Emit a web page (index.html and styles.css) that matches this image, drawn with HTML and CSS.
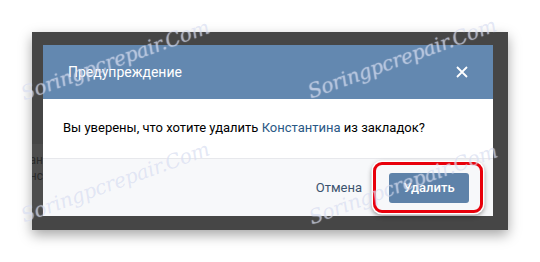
FILE: index.html
```html
<!DOCTYPE html>
<html lang="ru">
<head>
<meta charset="utf-8">
<link rel="stylesheet" href="styles.css">
</head>
<body>
<div class="page">
  <div class="frame">
    <div class="bg-strip">
      <span class="bg-text">тан</span>
      <span class="bg-text">нс</span>
    </div>
    <div class="modal">
      <div class="modal-header">
        <span class="modal-title">Предупреждение</span>
        <svg class="close" width="12" height="12" viewBox="0 0 12 12"><path d="M1 1L11 11M11 1L1 11" stroke="#fff" stroke-width="1.8" fill="none"/></svg>
      </div>
      <div class="modal-body">Вы уверены, что хотите удалить <a class="link">Константина</a> из закладок?</div>
      <div class="modal-footer">
        <span class="btn-cancel">Отмена</span>
        <span class="btn-wrap">
          <span class="btn-primary">Удалить</span>
          <span class="highlight"></span>
        </span>
      </div>
    </div>
  </div>
  <span class="wm wm1">Soringpcrepair.Com</span>
  <span class="wm wm2">Soringpcrepair.Com</span>
  <span class="wm wm3">Soringpcrepair.Com</span>
  <span class="wm wm4">Soringpcrepair.Com</span>
</div>
</body>
</html>
```
FILE: styles.css
```css
html, body {
  margin: 0;
  padding: 0;
  background: #fff;
  width: 540px;
  height: 262px;
  overflow: hidden;
}
.page {
  position: relative;
  width: 540px;
  height: 262px;
  padding: 32px 0 0 32px;
  box-sizing: border-box;
  font-family: Roboto, "Liberation Sans", Arial, sans-serif;
}
.frame {
  position: relative;
  width: 476px;
  height: 198px;
  box-sizing: border-box;
  background: #464646;
  padding: 13px 15px 14px 11px;
  box-shadow: 0 5px 12px rgba(0,0,0,0.35);
}
.bg-strip {
  position: absolute;
  left: 0;
  top: 112px;
  width: 11px;
  height: 72px;
  background: #4d4d4d;
  overflow: hidden;
  display: flex;
  flex-direction: column;
  align-items: flex-end;
}
.bg-text {
  font-size: 12px;
  color: #2a2a2a;
  line-height: 16px;
  width: 11px;
  overflow: hidden;
  white-space: nowrap;
  direction: rtl;
}
.bg-text:first-child { margin-top: 8px; }
.modal {
  position: relative;
  width: 450px;
  height: 171px;
  background: #fff;
  display: flex;
  flex-direction: column;
}
.modal-header {
  height: 54px;
  background: #6388b0;
  display: flex;
  align-items: center;
  justify-content: space-between;
  padding: 0 25px 0 25px;
}
.modal-title {
  color: #fff;
  font-size: 14px;
}
.close { display: block; }
.modal-body {
  height: 60px;
  box-sizing: border-box;
  padding: 21px 20px 0 20px;
  font-size: 13px;
  color: #000;
  line-height: 16px;
  border-bottom: 1px solid #e7e8ec;
}
.link { color: #2a5885; }
.modal-footer {
  flex: 1;
  background: #f7f8fa;
  display: flex;
  align-items: center;
  justify-content: flex-end;
  padding: 0 24px 0 0;
}
.btn-cancel {
  font-size: 13px;
  color: #3b536e;
  margin-right: 27px;
}
.btn-wrap {
  position: relative;
  display: block;
}
.btn-primary {
  display: flex;
  align-items: center;
  justify-content: center;
  width: 80px;
  height: 30px;
  border-radius: 3px;
  background: #5e82a9;
  color: #fff;
  font-size: 13px;
  font-weight: 500;
}
.highlight {
  position: absolute;
  left: -16px;
  top: -11px;
  width: 110px;
  height: 51px;
  box-sizing: border-box;
  border: 3px solid #e8000b;
  border-radius: 9px;
  box-shadow: 0 0 0 1.5px #fff, 0 2px 5px 1px rgba(0,0,0,0.45);
}
.wm {
  position: absolute;
  font-family: "DejaVu Serif", "Liberation Serif", serif;
  font-style: italic;
  font-size: 20px;
  color: rgba(185, 195, 230, 0.4);
  text-shadow: 0 0 1px rgba(255,255,255,0.6);
  transform: translate(-50%, -50%) rotate(-20deg);
  white-space: nowrap;
  letter-spacing: -0.3px;
}
.wm1 { left: 115px; top: 60px; }
.wm2 { left: 402px; top: 58px; }
.wm3 { left: 115px; top: 182px; }
.wm4 { left: 403px; top: 184px; }
```
